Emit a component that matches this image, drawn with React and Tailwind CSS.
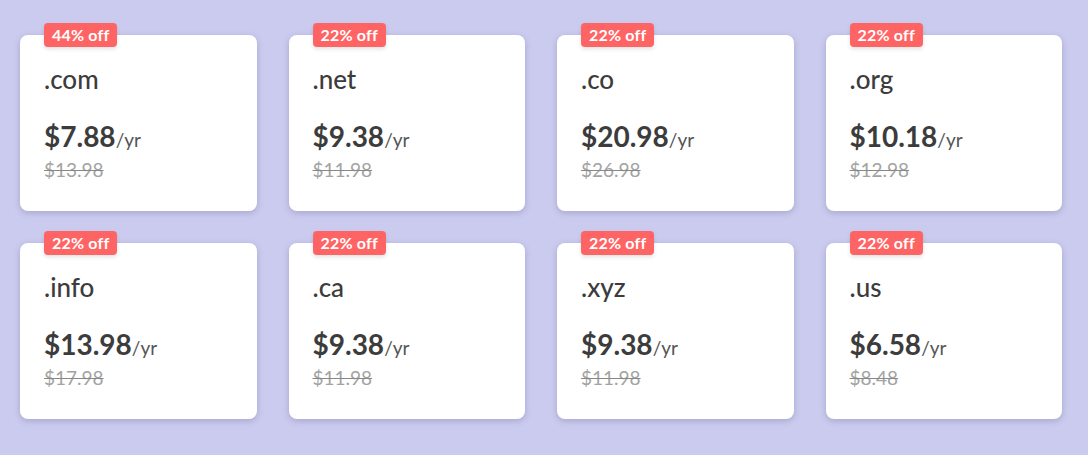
import React from "react";

const domains = [
  { tld: ".com", price: "$7.88", was: "$13.98", off: "44% off" },
  { tld: ".net", price: "$9.38", was: "$11.98", off: "22% off" },
  { tld: ".co", price: "$20.98", was: "$26.98", off: "22% off" },
  { tld: ".org", price: "$10.18", was: "$12.98", off: "22% off" },
  { tld: ".info", price: "$13.98", was: "$17.98", off: "22% off" },
  { tld: ".ca", price: "$9.38", was: "$11.98", off: "22% off" },
  { tld: ".xyz", price: "$9.38", was: "$11.98", off: "22% off" },
  { tld: ".us", price: "$6.58", was: "$8.48", off: "22% off" },
];

function DomainCard({ tld, price, was, off }) {
  return (
    <div className="relative h-[176px] rounded-lg bg-white px-6 pt-[28px] shadow-[0_2px_6px_rgba(60,60,120,0.25)]">
      <span className="absolute left-6 top-[-12px] h-6 rounded bg-[#ff6464] px-2 text-[16px] font-bold leading-6 tracking-[0.2px] text-white shadow-[0_2px_4px_rgba(0,0,0,0.12)]">
        {off}
      </span>
      <div className="text-[26px] font-medium leading-8 text-[#3c3c3c]">{tld}</div>
      <div className="mt-[23px] flex items-baseline text-[#3c3c3c]">
        <span className="text-[28px] font-bold leading-9">{price}</span>
        <span className="text-[19px] text-[#555]">/yr</span>
      </div>
      <div className="mt-[3px] text-[19px] leading-6 text-[#a3a3a3] line-through decoration-[#888]">
        {was}
      </div>
    </div>
  );
}

export default function App() {
  return (
    <div
      className="min-h-[455px] bg-[#cbcbef] pl-5 pr-[26px] pt-[35px] pb-9"
      style={{ fontFamily: "Lato, 'Noto Sans', sans-serif" }}
    >
      <div className="grid grid-cols-4 gap-8">
        {domains.map((d) => (
          <DomainCard key={d.tld} {...d} />
        ))}
      </div>
    </div>
  );
}
